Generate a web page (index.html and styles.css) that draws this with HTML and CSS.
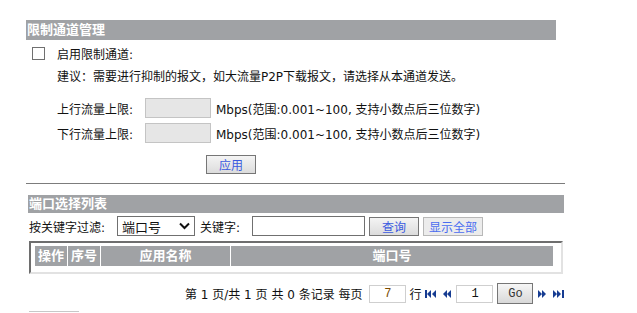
FILE: index.html
```html
<!DOCTYPE html>
<html>
<head>
  <meta charset="UTF-8">
  <link rel="stylesheet" href="styles.css">
</head>
<body>
  <div class="panel">
    <div class="bar">限制通道管理</div>
    <div class="check-row">
      <input type="checkbox" id="enableLimit">
      <label for="enableLimit">启用限制通道:</label>
    </div>
    <div class="hint-row">建议：需要进行抑制的报文，如大流量P2P下载报文，请选择从本通道发送。</div>
    <div class="field-row first">
      <span class="field-label">上行流量上限:</span>
      <input type="text" class="rate-input" disabled>
      <span>Mbps(范围:0.001~100, 支持小数点后三位数字)</span>
    </div>
    <div class="field-row">
      <span class="field-label">下行流量上限:</span>
      <input type="text" class="rate-input" disabled>
      <span>Mbps(范围:0.001~100, 支持小数点后三位数字)</span>
    </div>
    <div class="apply-row">
      <button class="btn" id="applyButton">应用</button>
    </div>
  </div>

  <div class="divider"></div>

  <div class="panel list-panel">
    <div class="bar small">端口选择列表</div>
    <div class="filter-row">
      <span class="filter-label">按关键字过滤:</span>
      <span class="select-wrap">
        <select id="filterField">
          <option>端口号</option>
          <option>应用名称</option>
        </select>
        <svg class="chevron" width="11" height="8" viewBox="0 0 11 8"><path d="M1 1.5 L5.5 6 L10 1.5" fill="none" stroke="#111" stroke-width="2"/></svg>
      </span>
      <span class="key-label">关键字:</span>
      <input type="text" class="key-input">
      <button class="btn">查询</button>
      <button class="btn light">显示全部</button>
    </div>

    <div class="list-frame">
      <div class="list-head">
        <div class="col op">操作</div>
        <div class="col idx">序号</div>
        <div class="col app">应用名称</div>
        <div class="col port">端口号</div>
      </div>
    </div>

    <div class="pager">
      <span>第 1 页/共 1 页 共 0 条记录 每页</span>
      <input type="text" class="page-input size" value="7">
      <span>行</span>
      <svg class="nav first-nav" width="11" height="8" viewBox="0 0 11 8"><rect x="0" y="0" width="2" height="8"/><path d="M6 0 L2 4 L6 8Z M11 0 L7 4 L11 8Z"/></svg>
      <svg class="nav prev-nav" width="8" height="8" viewBox="0 0 8 8"><path d="M4 0 L0 4 L4 8Z M8 0 L4 4 L8 8Z"/></svg>
      <input type="text" class="page-input num" value="1">
      <button class="go-btn">Go</button>
      <svg class="nav next-nav" width="8" height="8" viewBox="0 0 8 8"><path d="M0 0 L4 4 L0 8Z M4 0 L8 4 L4 8Z"/></svg>
      <svg class="nav last-nav" width="11" height="8" viewBox="0 0 11 8"><path d="M0 0 L4 4 L0 8Z M4 0 L8 4 L4 8Z"/><rect x="9" y="0" width="2" height="8"/></svg>
    </div>

    <div class="stub"></div>
  </div>
</body>
</html>
```

FILE: styles.css
```css
body {
  margin: 0;
  font-family: "DejaVu Sans", "Noto Sans CJK SC", sans-serif;
  font-size: 12px;
  color: #111;
  background-color: #FFF;
}

.panel {
  margin: 20px 0 0 26px;
  width: 530px;
}

.bar {
  height: 20px;
  line-height: 20px;
  padding-left: 1px;
  background-color: #a0a2a5;
  color: white;
  font-size: 13px;
  font-weight: bold;
}

.bar.small {
  height: 18px;
  line-height: 18px;
}

.check-row {
  display: flex;
  align-items: center;
  height: 20px;
  margin-top: 3px;
  padding-left: 6px;
}

.check-row input {
  appearance: none;
  width: 13px;
  height: 13px;
  margin: 0 12px 0 0;
  border: 1px solid #707070;
  background-color: white;
}

.hint-row {
  height: 20px;
  line-height: 20px;
  margin-top: 4px;
  padding-left: 31px;
}

.field-row {
  display: flex;
  align-items: center;
  height: 20px;
  margin-top: 5px;
  padding-left: 31px;
}

.field-row.first {
  margin-top: 11px;
}

.field-label {
  width: 88px;
}

.rate-input {
  box-sizing: border-box;
  width: 66px;
  height: 20px;
  margin: 0 5px 0 0;
  border: 1px solid #c4c4c4;
  background-color: #e6e6e6;
}

.apply-row {
  margin-top: 12px;
  padding-left: 180px;
  height: 19px;
}

.btn {
  box-sizing: border-box;
  width: 50px;
  height: 19px;
  padding: 0;
  border: 1px solid #767676;
  background: linear-gradient(#f4f4f4, #dcdcdc);
  color: #3a5ae0;
  font-family: "Noto Sans CJK SC", sans-serif;
  font-size: 12px;
  line-height: 17px;
}

.btn.light {
  width: 60px;
  margin-left: 4px;
  border-color: #b8b8b8;
  background: #ececec;
  color: #4a6cf0;
}

.divider {
  width: 539px;
  margin: 9px 0 0 26px;
  border-top: 1px solid #7c7c7c;
}

.list-panel {
  margin: 11px 0 0 28px;
  width: 536px;
}

.filter-row {
  display: flex;
  align-items: center;
  height: 20px;
  margin-top: 3px;
  padding-left: 1px;
}

.filter-label {
  width: 88px;
}

.select-wrap {
  position: relative;
  display: inline-block;
  width: 78px;
  height: 20px;
}

.select-wrap select {
  appearance: none;
  box-sizing: border-box;
  width: 78px;
  height: 20px;
  margin: 0;
  padding: 0 0 0 4px;
  border: 1px solid #707070;
  border-radius: 0;
  background-color: white;
  color: #111;
  font-family: "Noto Sans CJK SC", sans-serif;
  font-size: 13px;
}

.chevron {
  position: absolute;
  right: 5px;
  top: 6px;
}

.key-label {
  width: 52px;
  margin-left: 5px;
}

.key-input {
  box-sizing: border-box;
  width: 113px;
  height: 20px;
  margin: 0 4px 0 0;
  border: 1px solid #707070;
}

.list-frame {
  box-sizing: border-box;
  width: 534px;
  height: 33px;
  margin: 5px 0 0 1px;
  padding: 3px 8px 6px 4px;
  border-top: 2px solid #6e6e6e;
  border-left: 2px solid #6e6e6e;
  border-right: 2px solid #e2e2e2;
  border-bottom: 2px solid #e2e2e2;
}

.list-head {
  display: flex;
  gap: 1px;
  height: 20px;
  background-color: white;
}

.col {
  background-color: #a0a2a5;
  color: white;
  font-size: 13px;
  font-weight: bold;
  line-height: 20px;
  text-align: center;
}

.col.op { width: 32px; }
.col.idx { width: 32px; }
.col.app { width: 129px; }
.col.port { flex: 1; }

.pager {
  display: flex;
  align-items: center;
  height: 21px;
  margin-top: 9px;
  padding-left: 157px;
  white-space: nowrap;
}

.pager > * {
  flex-shrink: 0;
}

.page-input {
  box-sizing: border-box;
  width: 37px;
  height: 18px;
  margin: 0 3px 0 7px;
  padding: 0;
  border: 1px solid #cfcfcf;
  text-align: center;
  font-family: "Liberation Mono", monospace;
  font-size: 12px;
}

.page-input.size {
  color: #7a4a00;
}

.page-input.num {
  margin: 0 4px 0 5px;
  color: #111;
}

.nav {
  fill: #163c92;
}

.first-nav { margin-left: 4px; }
.prev-nav { margin-left: 7px; }
.next-nav { margin-left: 5px; }
.last-nav { margin-left: 7px; }

.go-btn {
  box-sizing: border-box;
  width: 36px;
  height: 21px;
  padding: 0;
  border: 1px solid #767676;
  background: linear-gradient(#f6f6f6, #d8d8d8);
  color: #333;
  font-family: "Liberation Mono", monospace;
  font-size: 12px;
}

.stub {
  width: 50px;
  height: 2px;
  margin: 7px 0 0 1px;
  border-top: 1px solid #c8c8c8;
}
```
